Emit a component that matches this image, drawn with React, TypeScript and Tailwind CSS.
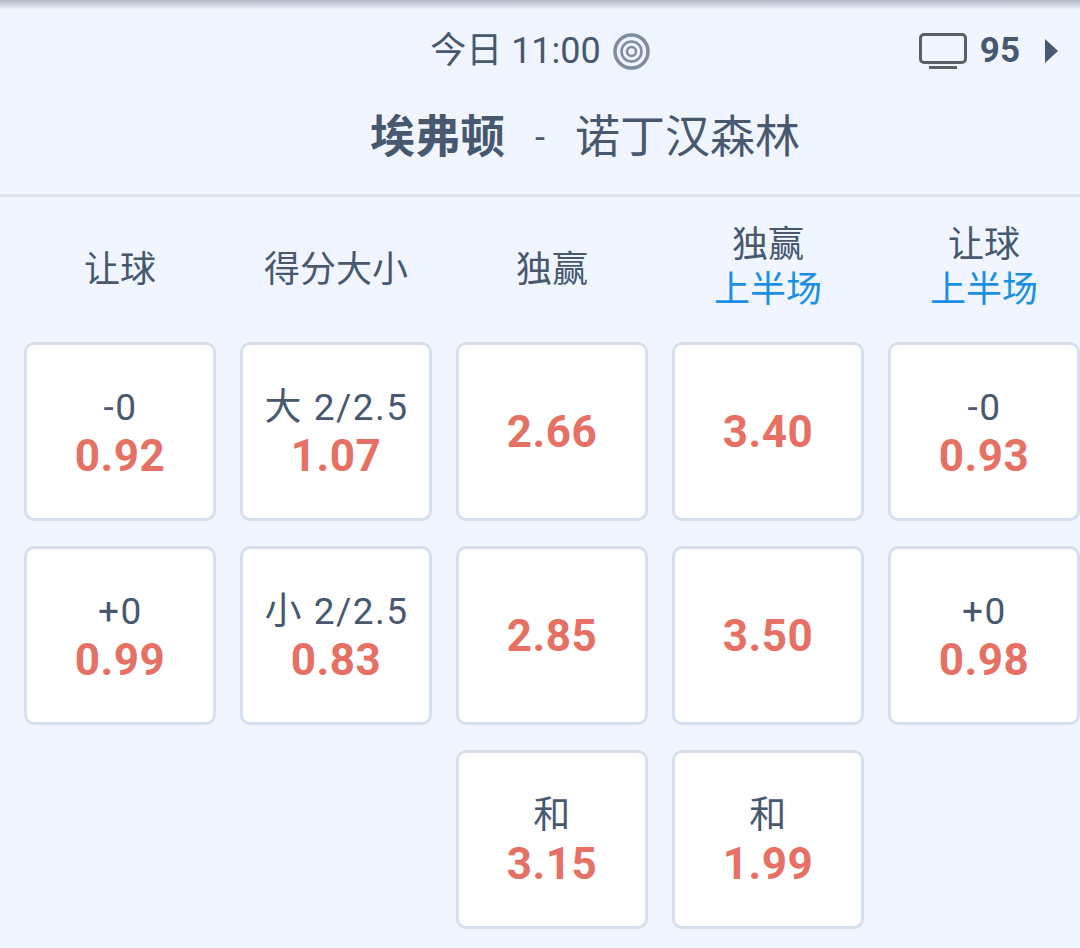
const FONT = "font-['Roboto','Noto_Sans_CJK_SC',sans-serif]";

type Cell = { label?: string; value: string } | null;

const columns: { head: string; sub?: string; cells: Cell[] }[] = [
  { head: "让球", cells: [{ label: "-0", value: "0.92" }, { label: "+0", value: "0.99" }, null] },
  { head: "得分大小", cells: [{ label: "大 2/2.5", value: "1.07" }, { label: "小 2/2.5", value: "0.83" }, null] },
  { head: "独赢", cells: [{ value: "2.66" }, { value: "2.85" }, { label: "和", value: "3.15" }] },
  { head: "独赢", sub: "上半场", cells: [{ value: "3.40" }, { value: "3.50" }, { label: "和", value: "1.99" }] },
  { head: "让球", sub: "上半场", cells: [{ label: "-0", value: "0.93" }, { label: "+0", value: "0.98" }, null] },
];

function OddsCell({ cell }: { cell: Cell }) {
  if (!cell) return <div className="h-[179px]" />;
  return (
    <div className="h-[179px] rounded-[10px] border-[3px] border-[#d7dfec] bg-white flex flex-col items-center justify-center">
      {cell.label && <div className="text-[37px] leading-[48px] tracking-[1.5px] pl-[1px] text-[#47586f] whitespace-nowrap">{cell.label}</div>}
      <div className="text-[44px] leading-[48px] font-bold text-[#e67063] tracking-[0.5px]">{cell.value}</div>
    </div>
  );
}

export default function App() {
  return (
    <div className={`${FONT} w-[1080px] h-[948px] overflow-hidden bg-[#f0f5ff] text-[#47586f]`}>
      <div className="h-[10px] bg-gradient-to-b from-[#b3b6c4] to-[#f0f5ff]" />
      <div className="h-[187px] border-b-[3px] border-[#dbe3ee]">
        <div className="grid grid-cols-[1fr_auto_1fr] items-center pt-[19px] h-[62px]">
          <div />
          <div className="flex items-center gap-[12px]">
            <span className="text-[36px] leading-[44px] whitespace-nowrap">今日 11:00</span>
            <svg width="37" height="37" viewBox="0 0 37 37" fill="none" stroke="#7f8ba0">
              <circle cx="18.5" cy="18.5" r="16.5" strokeWidth="3.5" />
              <circle cx="18.5" cy="18.5" r="10" strokeWidth="2.5" />
              <circle cx="18.5" cy="18.5" r="4.5" strokeWidth="2.5" />
            </svg>
          </div>
          <div className="flex items-center justify-end pr-[22px]">
            <svg width="48" height="36" viewBox="0 0 48 36" fill="none">
              <rect x="1.5" y="1.5" width="45" height="28" rx="3.5" stroke="#5a5f68" strokeWidth="3" />
              <rect x="10" y="33" width="28" height="3" fill="#5a5f68" />
            </svg>
            <span className="ml-[13px] text-[35px] leading-[44px] font-bold">95</span>
            <svg className="ml-[25px]" width="13" height="24" viewBox="0 0 13 24">
              <path d="M0 0 L13 12 L0 24 Z" fill="#47586f" />
            </svg>
          </div>
        </div>
        <div className="flex items-center justify-center pl-[90px] text-[45px] leading-[56px] mt-[38px] whitespace-nowrap">
          <span className="font-bold">埃弗顿</span>
          <span className="mx-[30px] text-[36px]">-</span>
          <span>诺丁汉森林</span>
        </div>
      </div>
      <div className="grid grid-cols-[192px_192px_192px_192px_192px] gap-x-[24px] pl-[24px]">
        {columns.map((c, i) => (
          <div key={i} className="flex flex-col gap-y-[25px]">
            <div className={`h-[120px] flex flex-col items-center justify-center text-[36px] leading-[45px] ${c.sub ? "pt-[22px]" : "pt-[27px]"}`}>
              <div>{c.head}</div>
              {c.sub && <div className="text-[#1a8fe3]">{c.sub}</div>}
            </div>
            {c.cells.map((cell, j) => (
              <OddsCell key={j} cell={cell} />
            ))}
          </div>
        ))}
      </div>
    </div>
  );
}
